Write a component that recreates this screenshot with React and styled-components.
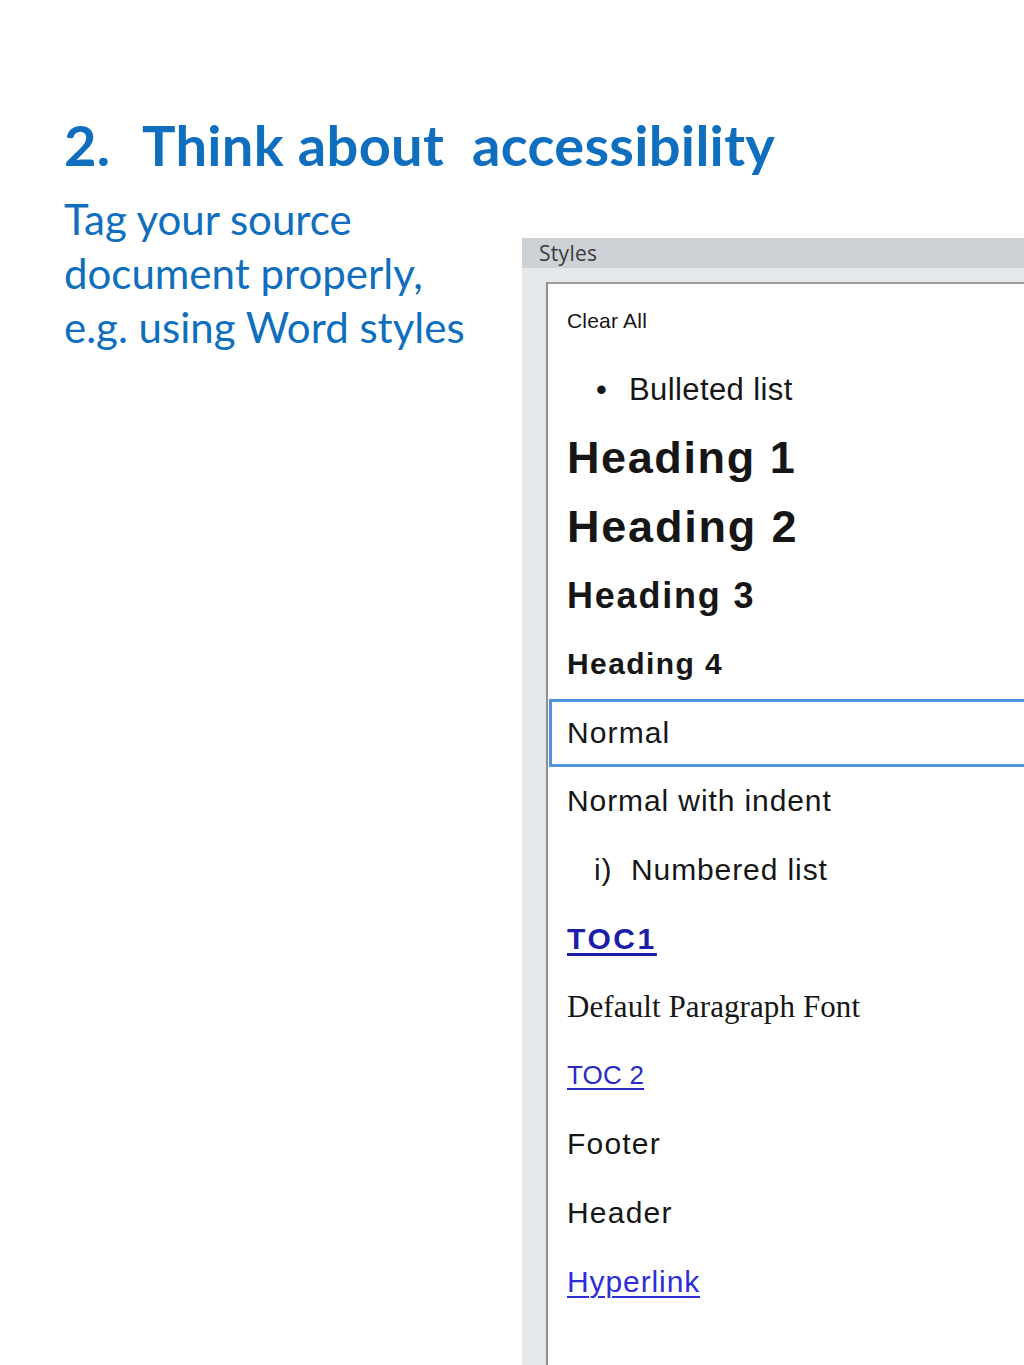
import styled, { createGlobalStyle } from 'styled-components'

const GlobalStyle = createGlobalStyle`
    html, body {
        margin: 0;
        padding: 0;
        background: #ffffff;
    }
`

const Page = styled.div`
    height: 1365px;
    overflow: hidden;
    display: flex;
    flex-direction: column;
    padding-left: 64px;
    box-sizing: border-box;
    font-family: Lato, "Open Sans", sans-serif;
`

const Title = styled.h1`
    margin: 112px 0 0 0;
    color: #0f6ebe;
    font-size: 56px;
    font-weight: 700;
    letter-spacing: 0.3px;
    line-height: 66px;
    white-space: pre;
    display: flex;
    & > span:first-child {
        width: 78px;
    }
`

const Content = styled.div`
    flex: 1;
    display: flex;
    align-items: stretch;
    min-height: 0;
`

const Intro = styled.p`
    width: 458px;
    margin: 14px 0 0 0;
    color: #0f6ebe;
    font-size: 42px;
    line-height: 54px;
`

const Panel = styled.div`
    flex: 1;
    margin-top: 60px;
    display: flex;
    flex-direction: column;
    font-family: "Liberation Sans", Arial, sans-serif;
`

const PanelHeader = styled.div`
    height: 30px;
    background: #cdd2d7;
    color: #3a3a3a;
    font-family: "Open Sans", "Noto Sans", sans-serif;
    font-size: 21px;
    letter-spacing: 0.3px;
    line-height: 30px;
    padding-left: 17px;
`

const PanelBody = styled.div`
    flex: 1;
    background: #e5e8eb;
    padding: 14px 0 0 24px;
    display: flex;
`

const ListBox = styled.div`
    flex: 1;
    background: #ffffff;
    border-top: 2px solid #9a9c9e;
    border-left: 2px solid #8c8e90;
    padding: 3px 0 0 1px;
`

const Row = styled.div`
    height: 68.6px;
    box-sizing: border-box;
    display: flex;
    align-items: center;
    padding-left: 15px;
    border: 3px solid ${({ $selected }) => ($selected ? '#4d93de' : 'transparent')};
    border-right: none;
    color: #161616;
    font-family: ${({ $serif }) =>
        $serif ? '"Liberation Serif", "Times New Roman", serif' : '"Liberation Sans", Arial, sans-serif'};
    font-size: ${({ $size }) => $size}px;
    font-weight: ${({ $bold }) => ($bold ? 700 : 400)};
    letter-spacing: ${({ $spacing }) => $spacing || 0}px;
    white-space: pre;
`

const Link = styled.span`
    color: ${({ $color }) => $color};
    text-decoration: underline;
    text-decoration-thickness: ${({ $thick }) => ($thick ? 3 : 2)}px;
    text-underline-offset: 4px;
`

const Marker = styled.span`
    display: inline-block;
    box-sizing: border-box;
    width: ${({ $width }) => $width}px;
    padding-left: ${({ $indent }) => $indent}px;
    font-size: ${({ $size }) => $size || 'inherit'};
`

function App() {
    return (
        <>
            <GlobalStyle />
            <Page>
                <Title>
                    <span>2.</span>
                    <span>Think about  accessibility</span>
                </Title>
                <Content>
                    <Intro>
                        Tag your source
                        <br />
                        document properly,
                        <br />
                        e.g. using Word styles
                    </Intro>
                    <Panel>
                        <PanelHeader>Styles</PanelHeader>
                        <PanelBody>
                            <ListBox>
                                <Row $size={21} $spacing={0.2}>Clear All</Row>
                                <Row $size={31} $spacing={0.4}>
                                    <Marker $indent={29} $width={62}>•</Marker>
                                    Bulleted list
                                </Row>
                                <Row $size={45} $bold $spacing={1.6}>Heading 1</Row>
                                <Row $size={45} $bold $spacing={1.8}>Heading 2</Row>
                                <Row $size={36} $bold $spacing={1.8}>Heading 3</Row>
                                <Row $size={30} $bold $spacing={1.4}>Heading 4</Row>
                                <Row $size={30} $selected $spacing={1.1}>Normal</Row>
                                <Row $size={30} $spacing={0.9}>Normal with indent</Row>
                                <Row $size={30} $spacing={0.9}>
                                    <Marker $indent={27} $width={64}>i)</Marker>
                                    Numbered list
                                </Row>
                                <Row $size={30} $bold $spacing={2.6}>
                                    <Link $color="#1d1da6" $thick>TOC1</Link>
                                </Row>
                                <Row $size={31} $serif $spacing={0.1}>Default Paragraph Font</Row>
                                <Row $size={26} $spacing={0.2}>
                                    <Link $color="#2a2ac4">TOC 2</Link>
                                </Row>
                                <Row $size={30} $spacing={1.2}>Footer</Row>
                                <Row $size={30} $spacing={1.2}>Header</Row>
                                <Row $size={30} $spacing={0.9}>
                                    <Link $color="#2e2ed6">Hyperlink</Link>
                                </Row>
                            </ListBox>
                        </PanelBody>
                    </Panel>
                </Content>
            </Page>
        </>
    )
}

export default App
